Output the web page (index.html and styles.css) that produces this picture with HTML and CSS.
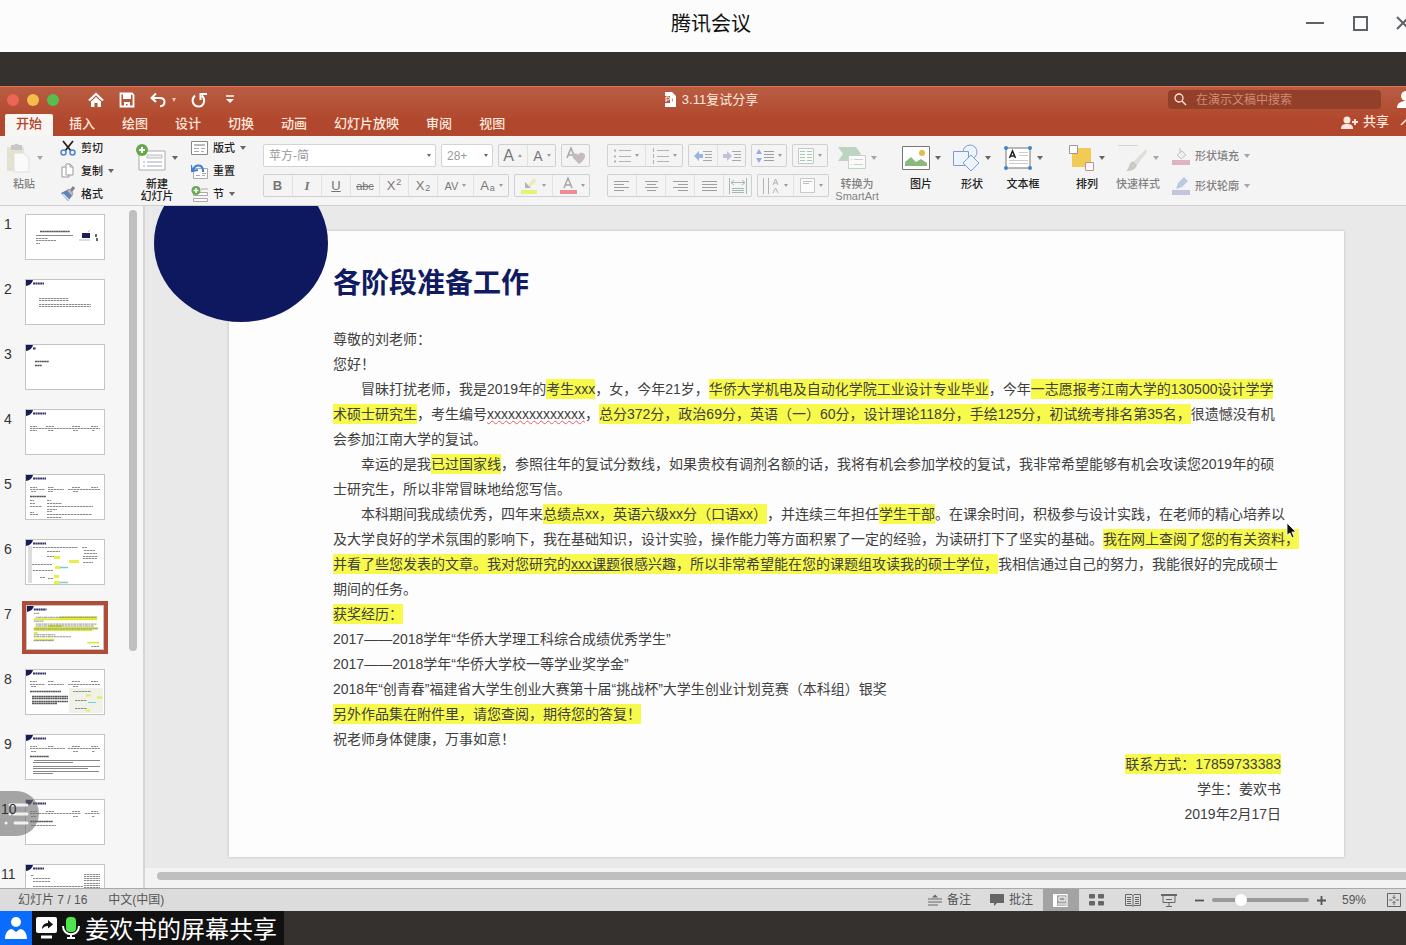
FILE: index.html
```html
<!DOCTYPE html>
<html lang="zh-CN">
<head>
	<meta charset="UTF-8">
	<title>腾讯会议</title>
	<link rel="stylesheet" href="styles.css">
</head>
<body>
	<div class="window">
		<header class="meeting-bar">
			<span class="meeting-title">腾讯会议</span>
			<div class="win-buttons">
				<button aria-label="最小化"><svg width="18" height="18" viewBox="0 0 18 18"><path d="M0 9h18" stroke-width="2"/></svg></button>
				<button aria-label="最大化"><svg width="16" height="16" viewBox="0 0 16 16"><rect x="2" y="2" width="13" height="13" stroke-width="2"/></svg></button>
				<button aria-label="关闭"><svg width="14" height="14" viewBox="0 0 14 14"><path d="M1 1l12 12M13 1L1 13" stroke-width="2"/></svg></button>
			</div>
		</header>

		<div class="band"></div>

		<div class="ppt-head">
			<div class="title-row">
				<div class="quick">
					<i class="light red"></i><i class="light yellow"></i><i class="light green"></i>
					<button class="home" aria-label="主页"><svg width="16" height="16" viewBox="0 0 16 16"><path d="M1 8.500L8 2l7 6.500" fill="none" stroke="#fff" stroke-width="2.200"/><path d="M3 9.500L8 5l5 4.500V15H9.500v-4h-3v4H3z" fill="#fff"/></svg></button>
					<button aria-label="保存"><svg width="16" height="16" viewBox="0 0 16 16"><path d="M1.500 1.500h11.500L14.500 3v11.500h-13z" fill="none" stroke="#fff" stroke-width="1.800"/><path d="M4 2h8v5H4zM5 10h6v4.500H8.500V12H7v2.500H5z" fill="#fff"/></svg></button>
					<button aria-label="撤销"><svg width="16" height="16" viewBox="0 0 16 16"><path d="M6 1.500L1.500 6 6 10M2 6h8c3 0 4.500 1.500 4.500 4S13 14 10 14.200" fill="none" stroke="#fff" stroke-width="2"/></svg><i class="caret light-caret"></i></button>
					<button aria-label="重做"><svg width="16" height="16" viewBox="0 0 16 16"><path d="M4 3.500C-.5 8 2 14.500 7.500 14.500S15 8 11 3.500M9.500 8V2H16" fill="none" stroke="#fff" stroke-width="2"/></svg></button>
					<button class="custom" aria-label="自定义"><svg width="8" height="9" viewBox="0 0 8 9"><path d="M0 1h8" stroke="#fff" stroke-width="1.500"/><path d="M0 4h8L4 8z" fill="#fff"/></svg></button>
				</div>
				<div class="doc-name">
					<svg width="13" height="15" viewBox="0 0 13 15"><path d="M1 0h7l4 4v11H1z" fill="#fff"/><path d="M0 4h6v7H0z" fill="#b3533a"/><path d="M2 10V5h2a1.500 1.500 0 0 1 0 3H2" fill="none" stroke="#fff"/><path d="M8 6a3 3 0 0 1 0 4z" fill="#b3533a"/></svg>
					3.11复试分享
				</div>
				<div class="title-right">
					<label class="search">
						<svg width="13" height="13" viewBox="0 0 13 13"><circle cx="5" cy="5" r="4" fill="none" stroke="#ffe3d8" stroke-width="1.300"/><path d="M8 8l4 4" stroke="#ffe3d8" stroke-width="1.500"/></svg>
						<input type="text" placeholder="在演示文稿中搜索" aria-label="在演示文稿中搜索">
					</label>
					<svg width="22" height="20" viewBox="0 0 22 20" fill="#fff"><circle cx="9" cy="6" r="5"/><path d="M0 18c0-5 4-7 9-7s9 2 9 7z"/></svg>
				</div>
			</div>
			<div class="tab-row">
				<nav class="tabs">
					<a href="#" class="active">开始</a>
					<a href="#">插入</a>
					<a href="#">绘图</a>
					<a href="#">设计</a>
					<a href="#">切换</a>
					<a href="#">动画</a>
					<a href="#">幻灯片放映</a>
					<a href="#">审阅</a>
					<a href="#">视图</a>
				</nav>
				<div class="share">
					<button><svg width="17" height="13" viewBox="0 0 17 13" fill="#ffe9df"><circle cx="6" cy="4" r="3.500"/><path d="M0 13c0-4 2-5 6-5s6 1 6 5z"/><path d="M11 6h6M14 3v6" stroke="#ffe9df" stroke-width="1.800"/></svg>共享</button>
					<button aria-label="折叠功能区"><svg width="12" height="8" viewBox="0 0 12 8"><path d="M1 7l5-5 5 5" fill="none" stroke="#ffe9df" stroke-width="1.500"/></svg></button>
				</div>
			</div>
		</div>

		<div class="ribbon">
			<button class="big paste off">
				<span class="pic"><svg width="26" height="30" viewBox="0 0 26 30"><path d="M1 4h17v24H1z" fill="#d9d2b4"/><path d="M5 2h3a3 3 0 0 1 5 0h3v5H5z" fill="#a5a39f"/><path d="M8 10h9l6 5v14H8z" fill="#fff" stroke="#cfcfc6"/></svg><i class="caret"></i></span>
				<span class="label">粘贴</span>
			</button>
			<div class="stack">
				<button class="small"><svg width="16" height="16" viewBox="0 0 16 16"><path d="M3 1l8 10M13 1L5 11" stroke="#222" stroke-width="1.800"/><g fill="none" stroke="#4a86d8" stroke-width="1.500"><circle cx="3.500" cy="12.500" r="2.500"/><circle cx="12.500" cy="12.500" r="2.500"/></g></svg>剪切</button>
				<button class="small"><svg width="16" height="16" viewBox="0 0 16 16" fill="#fff" stroke="#999"><path d="M2 4h5l2 2v8H2z"/><path d="M6 1h4l3 3v8H6z"/><path d="M10 1v3h3" fill="none"/></svg>复制<i class="caret"></i></button>
				<button class="small"><svg width="16" height="16" viewBox="0 0 16 16"><path d="M1 7l6-3 5 6-4 5z" fill="#5f82b8"/><path d="M3 8l6 6" stroke="#dce6f5" stroke-width="1.500"/><path d="M7 4l2-1 4 4-1 3z" fill="#bbb" stroke="#888" stroke-width=".6"/><path d="M11 5l3-4" stroke="#858585" stroke-width="3"/></svg>格式</button>
			</div>
			<button class="big new-slide">
				<span class="pic"><svg width="31" height="29" viewBox="0 0 31 29"><path d="M3 7h26v19H3z" fill="#fff" stroke="#aaa"/><path d="M11 11h15v3H11z" fill="#f0f0f0" stroke="#bbb"/><path d="M7 18h2M7 22h2M11 18h15M11 22h15" stroke="#9aa8b8"/><circle cx="6" cy="6" r="6" fill="#63a84c"/><path d="M6 3v6M3 6h6" stroke="#fff" stroke-width="2"/></svg><i class="caret"></i></span>
				<span class="label">新建<br>幻灯片</span>
			</button>
			<div class="stack">
				<button class="small"><svg width="17" height="16" viewBox="0 0 17 16"><path d="M.5 1.500h16v13H.5z" fill="#fff" stroke="#888"/><path d="M3 4h11v2H3z" fill="#bbb"/><path d="M3 8.500h5M3 11.500h5M10 8.500h4M10 11.500h3" stroke="#aaa"/></svg>版式<i class="caret"></i></button>
				<button class="small"><svg width="17" height="16" viewBox="0 0 17 16"><path d="M2.500 5.500h14v10h-14z" fill="#fff" stroke="#aaa"/><path d="M5 12.500h4M11 10.500h4M11 12.500h3" stroke="#aaa"/><path d="M2 7c2-6 9-6 10 0v2M0 2l1 6 6-1" fill="none" stroke="#3f7fd0" stroke-width="2"/></svg>重置</button>
				<button class="small"><svg width="17" height="16" viewBox="0 0 17 16"><path d="M10 3h7" stroke="#aaa"/><path d="M2.500 6.500h14v3h-14zM2.500 12.500h14v3h-14z" fill="#fff" stroke="#aaa"/><circle cx="5" cy="4.500" r="4.500" fill="#63a84c"/><path d="M5 2v5M2.500 4.500h5" stroke="#fff" stroke-width="1.500"/></svg>节<i class="caret"></i></button>
			</div>

			<div class="rows font-rows">
				<div class="row">
					<div class="field font-name"><select aria-label="字体"><option>苹方-简</option></select><i class="caret"></i></div>
					<div class="field font-size"><select aria-label="字号"><option>28+</option></select><i class="caret"></i></div>
					<div class="cells"><button><span class="fs16">A</span><i class="caret up"></i></button><button><span class="fs14">A</span><i class="caret"></i></button></div>
					<div class="cells"><button aria-label="清除格式"><svg width="20" height="19" viewBox="0 0 20 19"><path d="M1 12L5 2l4 10M2.500 9h5" fill="none" stroke="#777" stroke-width="1.500"/><path d="M13 18l-6-6c-2-4 3-6 5-3 2-4 8-2 7 2-1 3-3 5-6 7z" fill="#a8949c"/></svg></button></div>
				</div>
				<div class="row">
					<div class="cells">
						<button><b>B</b></button><button><b class="ital">I</b></button><button><u>U</u></button><button><s>abc</s></button><button>X<sup>2</sup></button><button>X<sub>2</sub></button>
						<button class="w36"><span class="spaced">AV</span><i class="caret"></i></button><button class="w36">A<sub>a</sub><i class="caret"></i></button>
					</div>
					<div class="cells">
						<button class="w38" aria-label="突出显示"><svg width="18" height="18" viewBox="0 0 18 18"><path d="M5 5v6h6z" fill="#888"/><path d="M8 8l6-7 3 3-7 6z" fill="#e5e3a0"/><path d="M1 13h16v4H1z" fill="#e0f020"/></svg><i class="caret"></i></button>
						<button class="w38" aria-label="字体颜色"><svg width="18" height="18" viewBox="0 0 18 18"><path d="M5 11L9 1l4 10M6.500 8h5" fill="none" stroke="#777" stroke-width="1.500"/><path d="M1 13h17v4H1z" fill="#f0455a"/></svg><i class="caret"></i></button>
					</div>
				</div>
			</div>

			<div class="rows para-rows">
				<div class="row">
					<div class="cells">
						<button class="w38" aria-label="项目符号"><svg width="17" height="16" viewBox="0 0 17 16" stroke="#888"><path d="M5 2.500h12M5 8.500h12M5 13.500h12"/><path d="M0 2.500h2M0 8.500h2M0 13.500h2" stroke-width="2"/></svg><i class="caret"></i></button>
						<button class="w38" aria-label="编号"><svg width="17" height="16" viewBox="0 0 17 16" stroke="#888"><path d="M5 2.500h12M5 8.500h12M5 13.500h12M1.500 0v4M1.500 6v4M1.500 12v4"/></svg><i class="caret"></i></button>
					</div>
					<div class="cells">
						<button aria-label="减少缩进"><svg width="18" height="12" viewBox="0 0 18 12"><path d="M9 1.500h9M11 4.500h7M11 7.500h7M9 10.500h9" stroke="#777"/><path d="M0 6l5-5v3h4v4H5v3z" fill="#5f88d8"/></svg></button>
						<button aria-label="增加缩进"><svg width="18" height="12" viewBox="0 0 18 12"><path d="M9 1.500h9M11 4.500h7M11 7.500h7M9 10.500h9" stroke="#777"/><path d="M9 6L4 1v3H0v4h4v3z" fill="#9c9fd0"/></svg></button>
					</div>
					<div class="cells"><button class="w36" aria-label="行距"><svg width="18" height="14" viewBox="0 0 18 14"><path d="M8 2.500h10M8 5.500h10M8 8.500h10M8 11.500h10" stroke="#666"/><path d="M0 5l3-5 3 5zM0 9h6l-3 5z" fill="#5580dc"/></svg><i class="caret"></i></button></div>
					<div class="cells"><button class="w36" aria-label="分栏"><svg width="16" height="16" viewBox="0 0 16 16"><path d="M.5.500h15v15H.5z" fill="#fff" stroke="#aaa"/><path d="M2 3.500h5M2 6.500h5M2 9.500h5M2 12.500h5M9 3.500h5M9 6.500h5M9 9.500h5M9 12.500h5" stroke="#72ab7c"/></svg><i class="caret"></i></button></div>
				</div>
				<div class="row">
					<div class="cells">
						<button aria-label="左对齐"><svg width="15" height="12" viewBox="0 0 15 12" stroke="#666"><path d="M0 1.500h15M0 4.500h10M0 7.500h15M0 10.500h10"/></svg></button>
						<button aria-label="居中"><svg width="15" height="12" viewBox="0 0 15 12" stroke="#666"><path d="M1 1.500h13M3 4.500h9M1 7.500h13M3 10.500h9"/></svg></button>
						<button aria-label="右对齐"><svg width="15" height="12" viewBox="0 0 15 12" stroke="#666"><path d="M0 1.500h15M5 4.500h10M0 7.500h15M5 10.500h10"/></svg></button>
						<button aria-label="两端对齐"><svg width="15" height="12" viewBox="0 0 15 12" stroke="#666"><path d="M0 1.500h15M0 4.500h15M0 7.500h15M0 10.500h15"/></svg></button>
						<button aria-label="分散对齐"><svg width="18" height="16" viewBox="0 0 18 16" fill="none" stroke="#6a9580"><path d="M.5 0v16M17.500 0v16M2 4.500h14M5 2L2 4.500 5 7M13 2l3 2.500L13 7M3 10.500h12M3 12.500h12M3 14.500h12"/></svg></button>
					</div>
					<div class="cells">
						<button class="w36" aria-label="文字方向"><svg width="18" height="16" viewBox="0 0 18 16" fill="none" stroke="#888"><path d="M1.500 0v16M6.500 0v16M11 7l2.500-6L16 7M12 5h3M11 15l2.500-5 2.500 5"/></svg><i class="caret"></i></button>
						<button class="w36" aria-label="对齐文本"><svg width="15" height="15" viewBox="0 0 15 15"><path d="M.5.500h14v14H.5z" fill="#fff" stroke="#aaa"/><path d="M3 3.500h9M3 5.500h6" stroke="#999"/></svg><i class="caret"></i></button>
					</div>
				</div>
			</div>

			<div class="bigs">
				<button class="big off">
					<span class="pic"><svg width="28" height="24" viewBox="0 0 28 24"><path d="M0 1h18l5 7-5 7H0l5-7z" fill="#8fbb99"/><path d="M10.500 9.500h17v13h-17z" fill="#fff" stroke="#9abaa2"/><path d="M13 13.500h1M13 18.500h1M16 13.500h9M16 18.500h9" stroke="#9abaa2"/></svg><i class="caret"></i></span>
					<span class="label">转换为<br>SmartArt</span>
				</button>
			</div>
			<div class="bigs">
				<button class="big">
					<span class="pic"><svg width="28" height="24" viewBox="0 0 28 24"><path d="M.5.500h27v23H.5z" fill="#fff" stroke="#777"/><path d="M3 20v-4l6-5 5 5 5-3 6 4v3z" fill="#8bb87d"/><circle cx="20" cy="7" r="3" fill="#e0bd4e"/></svg><i class="caret"></i></span>
					<span class="label">图片</span>
				</button>
				<button class="big">
					<span class="pic"><svg width="27" height="28" viewBox="0 0 27 28" fill="#eef4fd" stroke="#7f9ccb"><circle cx="17" cy="8" r="7"/><path d="M.5 7.500h15v14H.5z"/><path d="M18 11l8 8-8 8-8-8z"/></svg><i class="caret"></i></span>
					<span class="label">形状</span>
				</button>
				<button class="big">
					<span class="pic"><svg width="28" height="24" viewBox="0 0 28 24"><path d="M2 2h24v20H2z" fill="#fff" stroke="#777"/><path d="M15 6.500h9M15 9.500h9M5 14.500h19M5 17.500h19" stroke="#ccc"/><path d="M5.500 12L8.500 5l3 7M6.500 10h4" fill="none" stroke="#222" stroke-width="1.500"/><g fill="#3c86cf"><circle cx="2" cy="2" r="2"/><circle cx="26" cy="2" r="2"/><circle cx="2" cy="22" r="2"/><circle cx="26" cy="22" r="2"/></g></svg><i class="caret"></i></span>
					<span class="label">文本框</span>
				</button>
			</div>
			<div class="bigs">
				<button class="big">
					<span class="pic"><svg width="25" height="26" viewBox="0 0 25 26"><path d="M3 3h19v19H3z" fill="#f2cb54"/><path d="M.5.500h8v8h-8z" fill="#fff" stroke="#999"/><path d="M16.500 17.500h8v8h-8z" fill="#fff" stroke="#c98b99"/></svg><i class="caret"></i></span>
					<span class="label">排列</span>
				</button>
				<button class="big off">
					<span class="pic"><svg width="30" height="28" viewBox="0 0 30 28"><path d="M0 1.500h20L5 22z" fill="#f3f3f3"/><path d="M0 1.500h20" stroke="#bbb"/><path d="M28 5L15 18l4 3L29 8z" fill="#d0d1c6"/><path d="M15 17l4 4c-1 5-7 6-11 6 4-3 2-8 7-10z" fill="#a3ab9c"/></svg><i class="caret"></i></span>
					<span class="label">快速样式</span>
				</button>
			</div>
			<div class="rows shape-rows off">
				<button class="small"><svg width="18" height="18" viewBox="0 0 18 18"><path d="M8 1v5M5 8l5-4 4 4-5 4z" fill="#eee" stroke="#999"/><path d="M0 13h18v5H0z" fill="#cd8093"/></svg>形状填充<i class="caret"></i></button>
				<button class="small"><svg width="18" height="18" viewBox="0 0 18 18"><path d="M4 12l2-6 6-6 4 4-6 6z" fill="#8da9d6"/><path d="M0 13h18v5H0z" fill="#9aa0c9"/></svg>形状轮廓<i class="caret"></i></button>
			</div>
		</div>

		<div class="workspace">
			<aside class="panel">
				<ol class="thumbs">
					<li><span>1</span><a href="#" aria-label="幻灯片 1"><svg viewBox="0 0 78 44"><path class="t-bold" d="M14 16.500h30"/><path class="t-solid" d="M10 20.500h37"/><path class="t-line" d="M10 23.500h12M10 25.500h20M10 28.500h4"/><path d="M56 18h8v5h-8z" fill="#1a1c5e"/><path d="M53 25h11M64 15l-2 2" fill="none" stroke="#99a" stroke-width=".7"/><path d="M70 19v3M71 23v3" stroke="#333" stroke-width="1.500"/></svg></a></li>
					<li><span>2</span><a href="#" aria-label="幻灯片 2"><svg viewBox="0 0 78 44"><path class="t-corner" d="M0 0h7q-1 5-7 6z"/><path class="t-head" d="M7 3.500h11"/><path class="t-line" d="M13 18.500h29M13 20.500h30M13 24.500h52M13 26.500h52"/></svg></a></li>
					<li><span>3</span><a href="#" aria-label="幻灯片 3"><svg viewBox="0 0 78 44"><path class="t-corner" d="M0 0h7q-1 5-7 6z"/><path class="t-head" d="M7 3.500h3"/><path class="t-bold" d="M9 16.500h14M9 20.500h7"/></svg></a></li>
					<li><span>4</span><a href="#" aria-label="幻灯片 4"><svg viewBox="0 0 78 44"><path class="t-corner" d="M0 0h7q-1 5-7 6z"/><path class="t-head" d="M7 3.500h13"/><path class="t-line" d="M4 16.500h7M20 16.500h8M46 16.500h8M65 16.500h7M4 18.500h70M4 20.500h7M22 20.500h6M47 20.500h5M66 20.500h3"/></svg></a></li>
					<li><span>5</span><a href="#" aria-label="幻灯片 5"><svg viewBox="0 0 78 44"><path class="t-corner" d="M0 0h7q-1 5-7 6z"/><path class="t-head" d="M7 3.500h13"/><path class="t-line" d="M4 12.500h7M22 12.500h6M46 12.500h8M65 12.500h7M4 14.500h15M22 14.500h16M42 14.500h32M5 16.500h5M22 16.500h5M47 16.500h5M4 25.500h4M4 28.500h5M4 31.500h12M4 37.500h4M4 39.500h8M21 25.500h4M21 28.500h15M21 31.500h46M21 34.500h10M21 36.500h5M21 39.500h45M21 42.500h15"/><path class="t-bold" d="M4 21.500h16"/></svg></a></li>
					<li><span>6</span><a href="#" aria-label="幻灯片 6"><svg viewBox="0 0 78 44"><path class="t-corner" d="M0 0h7q-1 5-7 6z"/><path class="t-head" d="M7 3.500h13"/><path d="M2 6h4v37H2z" fill="#ddd"/><path class="t-line" d="M7 7.500h45M21 11.500h13M21 16.500h7M6 24.500h20M7 30.500h20M14 37.500h5M22 38.500h5M56 7.500h5M58 10.500h11M58 13.500h13M57 16.500h15M57 18.500h14M57 22.500h10"/><path d="M28 17.500h6M43 21.500h10M29 27.500h5M28 36.500h5M28 42.500h6" stroke="#e5f044" stroke-width="3"/><path d="M34 27.500h8M34 42.500h8" stroke="#68d6d0" stroke-width="1.500"/></svg></a></li>
					<li class="current"><span>7</span><a href="#" aria-label="幻灯片 7"><svg viewBox="0 0 78 44"><path class="t-corner" d="M0 0h7q-1 5-7 6z"/><path class="t-head" d="M7 3.500h13"/><path d="M33 11.500h39M7 13.500h65M22 20.500h14M7 22.500h66M7 24.500h60M7 27.500h4M7 34.500h21M62 37.500h12" stroke="#dde83c" stroke-width="2"/><path class="t-line" d="M7 7.500h6M9 11.500h63M7 15.500h10M9 18.500h63M9 20.500h60M7 23.500h66M7 29.500h22M7 31.500h38M7 35.500h20M66 41.500h8"/></svg></a></li>
					<li><span>8</span><a href="#" aria-label="幻灯片 8"><svg viewBox="0 0 78 44"><path class="t-corner" d="M0 0h7q-1 5-7 6z"/><path class="t-head" d="M7 3.500h13"/><path class="t-line" d="M4 11.500h7M22 11.500h6M46 11.500h8M65 11.500h7M4 14.500h15M22 14.500h16M42 14.500h32M5 16.500h5M47 16.500h5"/><path class="t-bold" d="M4 21.500h31M6 26.500h36M6 28.500h36M6 31.500h36M6 33.500h25"/><path d="M43 18h34v25H43z" fill="#f0f1e8"/><path class="t-line" d="M47 21.500h18M49 30.500h12M49 38.500h12"/><path d="M60 25.500h5M71 27.500h5M60 40.500h4" stroke="#e5f044" stroke-width="2"/><path d="M62 32.500h8" stroke="#68d6d0"/></svg></a></li>
					<li><span>9</span><a href="#" aria-label="幻灯片 9"><svg viewBox="0 0 78 44"><path class="t-corner" d="M0 0h7q-1 5-7 6z"/><path class="t-head" d="M7 3.500h13"/><path class="t-line" d="M4 11.500h7M22 11.500h6M46 11.500h8M65 11.500h7M4 13.500h35M42 13.500h32M5 16.500h5M47 16.500h5M66 16.500h3"/><path class="t-bold" d="M4 21.500h19"/><path class="t-solid" d="M8 25.500h66M7 27.500h40M7 31.500h67M7 33.500h55M7 36.500h66M7 38.500h20"/></svg></a></li>
					<li><span>10</span><a href="#" aria-label="幻灯片 10"><svg viewBox="0 0 78 44"><path class="t-corner" d="M0 0h7q-1 5-7 6z"/><path class="t-head" d="M7 3.500h13"/><path class="t-line" d="M4 11.500h7M20 11.500h8M46 11.500h8M65 11.500h7M4 13.500h51M59 13.500h15M5 16.500h5M47 16.500h5M66 16.500h3M5 25.500h25"/><path class="t-bold" d="M4 21.500h23"/></svg></a></li>
					<li><span>11</span><a href="#" aria-label="幻灯片 11"><svg viewBox="0 0 78 44"><path class="t-corner" d="M0 0h7q-1 5-7 6z"/><path class="t-head" d="M7 3.500h11"/><path class="t-line" d="M5 10.500h3M7 13.500h17M7 16.500h17M7 21.500h50M7 24.500h18M58 9.500h16M58 11.500h16M58 13.500h16M58 15.500h16M58 18.500h16M58 20.500h16M58 22.500h16"/></svg></a></li>
				</ol>
				<div class="v-scroll"><div></div></div>
				<button class="float-menu" aria-label="成员列表"><svg width="25" height="24" viewBox="0 0 25 24" stroke="#fff" stroke-width="3" stroke-linecap="round" opacity=".85"><path d="M6 3h17M10 12h13M11 21h12M6 12h.1M2 21h.1"/></svg></button>
			</aside>

			<main class="stage">
				<article class="slide">
					<div class="circle"></div>
					<h1>各阶段准备工作</h1>
					<div class="letter">
						<p>尊敬的刘老师：</p>
						<p>您好！</p>
						<p class="indent">冒昧打扰老师，我是2019年的<mark>考生xxx</mark>，女，今年21岁，<mark>华侨大学机电及自动化学院工业设计专业毕业</mark>，今年<mark>一志愿报考江南大学的130500设计学学<br>术硕士研究生</mark>，考生编号<span class="typo">xxxxxxxxxxxxxx</span>，<mark>总分372分，政治69分，英语（一）60分，设计理论118分，手绘125分，初试统考排名第35名，</mark>很遗憾没有机<br>会参加江南大学的复试。</p>
						<p class="indent">幸运的是我<mark>已过国家线</mark>，参照往年的复试分数线，如果贵校有调剂名额的话，我将有机会参加学校的复试，我非常希望能够有机会攻读您2019年的硕<br>士研究生，所以非常冒昧地给您写信。</p>
						<p class="indent">本科期间我成绩优秀，四年来<mark>总绩点xx，英语六级xx分（口语xx）</mark>，并连续三年担任<mark>学生干部</mark>。在课余时间，积极参与设计实践，在老师的精心培养以<br>及大学良好的学术氛围的影响下，我在基础知识，设计实验，操作能力等方面积累了一定的经验，为读研打下了坚实的基础。<mark>我在网上查阅了您的有关资料，<br>并看了些您发表的文章。我对您研究的<u>xxx课题</u>很感兴趣，所以非常希望能在您的课题组攻读我的硕士学位，</mark>我相信通过自己的努力，我能很好的完成硕士<br>期间的任务。</p>
						<p><mark>获奖经历：</mark></p>
						<p>2017——2018学年“华侨大学理工科综合成绩优秀学生”</p>
						<p>2017——2018学年“华侨大学校一等学业奖学金”</p>
						<p>2018年“创青春”福建省大学生创业大赛第十届“挑战杯”大学生创业计划竞赛（本科组）银奖</p>
						<p><mark>另外作品集在附件里，请您查阅，期待您的答复！</mark></p>
						<p>祝老师身体健康，万事如意！</p>
						<p class="right"><mark>联系方式：17859733383</mark></p>
						<p class="right">学生：姜欢书</p>
						<p class="right">2019年2月17日</p>
					</div>
					<svg class="pointer" width="12" height="17" viewBox="0 0 12 17"><path d="M1 1v12l3-2 2 5 2-1-2-5h4z" fill="#111" stroke="#fff" stroke-width=".8"/></svg>
				</article>
				<div class="h-scroll"><div></div></div>
			</main>
		</div>

		<footer class="status">
			<span class="page">幻灯片 7 / 16</span>
			<span>中文(中国)</span>
			<div class="status-right">
				<button class="notes"><svg width="14" height="12" viewBox="0 0 14 12"><path d="M0 5h14M0 8h14M0 11h10" stroke="#666" stroke-width="1.200"/><path d="M4 3.500l3-3 3 3z" fill="#666"/></svg>备注</button>
				<button class="comments"><svg width="14" height="12" viewBox="0 0 14 12"><path d="M0 0h14v9H7l-3 3V9H0z" fill="#666"/></svg>批注</button>
				<button class="view on" aria-label="普通视图"><svg width="15" height="13" viewBox="0 0 15 13"><path d="M0 0h4v13H0z" fill="#fff"/><path d="M1 .600h13v11.800H1z" fill="none" stroke="#fff" stroke-width="1.200"/><path d="M6 3h6v4H6zM5 10h8" fill="none" stroke="#fff"/></svg></button>
				<button class="view" aria-label="幻灯片浏览"><svg width="16" height="12" viewBox="0 0 16 12" fill="#666"><rect width="6" height="4.500" rx="1"/><rect x="9" width="6" height="4.500" rx="1"/><rect y="7" width="6" height="4.500" rx="1"/><rect x="9" y="7" width="6" height="4.500" rx="1"/></svg></button>
				<button class="view" aria-label="阅读视图"><svg width="16" height="13" viewBox="0 0 16 13" fill="none" stroke="#666"><path d="M.5.500H7l1 1 1-1h6.500v11H9l-1 1-1-1H.5zM8 1v11M2 3.500h4M2 5.500h4M2 7.500h4M2 9.500h4M10 3.500h4M10 5.500h4M10 7.500h4M10 9.500h4"/></svg></button>
				<button class="view" aria-label="幻灯片放映"><svg width="16" height="13" viewBox="0 0 16 13" fill="none" stroke="#666"><path d="M0 1h16" stroke-width="2"/><path d="M2 2v6.500h12V2M5 5.500h6M8 9v3M5 12.500h6"/></svg></button>
				<button class="zoom-btn" aria-label="缩小"><svg width="9" height="9" viewBox="0 0 9 9"><path d="M0 4.500h9" stroke="#555" stroke-width="1.800"/></svg></button>
				<input class="zoom" type="range" min="0" max="100" value="27" aria-label="缩放">
				<button class="zoom-btn" aria-label="放大"><svg width="9" height="9" viewBox="0 0 9 9"><path d="M0 4.500h9M4.500 0v9" stroke="#555" stroke-width="1.800"/></svg></button>
				<span class="percent">59%</span>
				<button class="fit" aria-label="适应窗口"><svg width="14" height="14" viewBox="0 0 14 14" fill="none" stroke="#666"><path d="M.5.500h13v13H.5zM7 2v3.500M7 8.500V12M2 7h3.500M8.500 7H12M5.500 4L7 5.500 8.500 4M5.500 10L7 8.500 8.500 10"/></svg></button>
			</div>
		</footer>

		<div class="sharing">
			<div class="avatar"><svg width="24" height="24" viewBox="0 0 24 24" fill="#fff"><circle cx="12" cy="6" r="5"/><path d="M1 23c0-7 4-10 7-10l4 3 4-3c3 0 7 3 7 10z"/></svg></div>
			<div class="sharer">
				<svg width="21" height="22" viewBox="0 0 21 22"><rect width="21" height="16" rx="2" fill="#fff"/><path d="M6 12c0-4 3-6 6-6V3l5 4.500-5 4V9c-3 0-4 1-6 3z" fill="#111"/><path d="M5 20h11" stroke="#fff" stroke-width="3"/></svg>
				<svg width="18" height="22" viewBox="0 0 18 22"><rect x="4" y="0" width="10" height="15" rx="4" fill="#4ce64a"/><path d="M1 9c0 11 16 11 16 0M9 17v4" fill="none" stroke="#fff" stroke-width="2"/><path d="M5 21h8" stroke="#fff" stroke-width="2"/></svg>
				姜欢书的屏幕共享
			</div>
		</div>
	</div>
</body>
</html>
```
FILE: styles.css
```css
*{
	margin: 0;
	padding: 0;
	box-sizing: border-box;
}
body{
	height: 100vh;
	overflow: hidden;
	font: 12px/16px "Liberation Sans", "Noto Sans CJK SC", sans-serif;
	color: #222;
	background: #35312e;
}
button{
	display: flex;
	align-items: center;
	border: 0;
	background: none;
	font: inherit;
	color: inherit;
	white-space: nowrap;
}
a{
	color: inherit;
	text-decoration: none;
}
svg{
	display: block;
	flex: none;
}
/* the shared desktop runs a little past the right edge */
.window{
	display: flex;
	flex-direction: column;
	width: calc(100% + 16px);
	height: 100%;
}
.meeting-bar{
	display: grid;
	grid-template-columns: 1fr auto 1fr;
	align-items: center;
	height: 52px;
	padding-bottom: 6px;
	background: #fcfcfc;
}
.meeting-title{
	grid-column: 2;
	font: 20px/28px "Noto Sans CJK SC", sans-serif;
	color: #111;
}
.win-buttons{
	display: flex;
	align-items: center;
	justify-content: flex-end;
	gap: 28px;
	padding-right: 12px;
}
.win-buttons svg{
	fill: none;
	stroke: #5c6266;
}
.band{
	height: 34px;
}

/* title and tabs */
.ppt-head{
	height: 50px;
	border-top: 1px solid #e8714d;
	background: linear-gradient(#b85d42, #b1472c 70%);
	color: #ffe9df;
}
.title-row{
	display: grid;
	grid-template-columns: 1fr auto 1fr;
	align-items: center;
	height: 25px;
}
.quick{
	display: flex;
	align-items: center;
	gap: 8px;
	padding-left: 7px;
}
.light{
	width: 12px;
	height: 12px;
	border-radius: 50%;
}
.red{ background: #ed6557; }
.yellow{ background: #f5bc4b; }
.green{ background: #58bd4f; }
.quick .home{
	margin-left: 21px;
}
.quick button{
	gap: 6px;
	margin-right: 7px;
}
.quick .custom{
	margin-left: 4px;
}
.caret{
	flex: none;
	border: 3px solid transparent;
	border-top: 4px solid #666;
	border-bottom: 0;
}
.light-caret{
	border-width: 4px 2px 0;
	border-top-color: #f0c4b4;
}
.up{
	border-top: 0;
	border-bottom: 4px solid #666;
}
.doc-name{
	display: flex;
	align-items: center;
	gap: 5px;
	font-size: 13px;
}
.title-right{
	display: flex;
	justify-content: flex-end;
	align-items: center;
	gap: 16px;
}
.search{
	display: flex;
	align-items: center;
	gap: 9px;
	width: 213px;
	height: 19px;
	padding-left: 6px;
	border-radius: 4px;
	background: #93402a;
}
.search input{
	flex: 1;
	min-width: 0;
	border: 0;
	outline: 0;
	background: none;
	font: inherit;
	color: #fff;
}
.search input::placeholder{
	color: #d08a76;
}
.title-right > svg{
	margin-right: 3px;
}
.tab-row{
	display: flex;
	justify-content: space-between;
	height: 24px;
}
.tabs{
	display: flex;
	gap: 5px;
	padding: 2px 0 0 5px;
}
.tabs a{
	padding: 0 11px;
	font-size: 13px;
	font-weight: 500;
	line-height: 20px;
}
.tabs .active{
	color: #b5412a;
	background: #f8f5f3;
	border-radius: 2px 2px 0 0;
}
.share{
	display: flex;
	gap: 11px;
	padding-right: 10px;
	font-size: 13px;
	font-weight: 500;
}
.share button{
	height: 20px;
	gap: 5px;
}

/* ribbon */
.ribbon{
	display: flex;
	align-items: flex-start;
	height: 70px;
	border-bottom: 1px solid #cfcfcf;
	background: #f5f4f4;
	font-size: 11px;
	font-weight: 500;
}
.off{
	opacity: .55;
}
.big{
	flex-direction: column;
	width: 48px;
	padding-top: 6px;
}
.pic{
	display: flex;
	align-items: center;
	gap: 5px;
	height: 32px;
}
.big .label{
	margin-top: 4px;
	line-height: 12px;
}
.stack{
	display: flex;
	flex-direction: column;
}
.paste{
	margin-right: 12px;
}
.new-slide{
	margin: 0 10px 0 19px;
}
.small{
	height: 23px;
	gap: 5px;
}
.rows{
	display: flex;
	flex-direction: column;
	gap: 7px;
	padding-top: 8px;
}
.row{
	display: flex;
	gap: 5px;
}
.font-rows,
.para-rows{
	margin-left: 17px;
}
.field{
	display: flex;
	align-items: center;
	height: 23px;
	padding: 0 4px 0 5px;
	border: 1px solid #d4d4d4;
	border-radius: 2px;
	background: #fff;
}
.field select{
	flex: 1;
	min-width: 0;
	border: 0;
	appearance: none;
	background: none;
	font: inherit;
	font-size: 12px;
	font-weight: 400;
	color: #999;
}
.font-name{ width: 173px; }
.font-size{ width: 52px; }
.cells{
	display: flex;
	height: 23px;
	border-radius: 2px;
	box-shadow: inset 0 0 0 1px #d0d0d0;
}
.cells button{
	justify-content: center;
	gap: 4px;
	width: 29px;
	font-size: 13px;
	opacity: .6;
}
.cells button + button{
	border-left: 1px solid #d6d6d6;
}
.cells .w36{ width: 36px; }
.cells .w38{ width: 38px; }
.cells .caret,
.field .caret{
	border-width: 3px 2px 0;
}
.cells .up{
	border-width: 0 2px 3px;
}
.cells sup,
.cells sub{
	margin-left: -3px;
	font-size: 9px;
	line-height: 9px;
}
.cells sup{ margin-bottom: 6px; }
.cells sub{ margin-top: 6px; }
.ital{ font-family: "Liberation Serif", serif; font-style: italic; }
.cells s{ font-size: 11px; }
.fs16{ font-size: 16px; }
.fs14{ font-size: 14px; }
.spaced{ font-size: 11px; }
.bigs{
	display: flex;
	gap: 3px;
	margin-right: 16px;
}
.para-rows + .bigs{
	margin-left: 4px;
}
.shape-rows{
	margin-left: -6px;
}

/* slides panel */
.workspace{
	display: flex;
	flex: 1;
	min-height: 0;
}
.panel{
	position: relative;
	display: flex;
	justify-content: space-between;
	width: 145px;
	border-right: 2px solid #d5d5d5;
	overflow: hidden;
	background: #f6f6f6;
}
.thumbs{
	list-style: none;
	padding: 5px 0 0;
}
.thumbs li{
	display: flex;
	height: 65px;
}
.thumbs span{
	z-index: 1;
	width: 22px;
	padding: 5px 0 0 4px;
	font-size: 14px;
	color: #333;
}
.thumbs li:nth-child(n+10) span{
	padding-left: 1px;
}
.thumbs a{
	width: 86px;
	height: 53px;
	padding: 3px;
	border: 0 solid #b04c37;
}
.thumbs svg{
	width: 80px;
	height: 46px;
	border: 1px solid #c4c4c4;
	background: #fff;
}
.thumbs .current a{
	padding: 0;
	border-width: 4px;
	background: #fff;
}
.thumbs .current svg{
	width: 78px;
	height: 45px;
}
.t-corner{ fill: #191a58; }
.t-head{ stroke: #33336b; stroke-width: 2; stroke-dasharray: 2 .4; }
.t-line{ stroke: #8c8c8c; stroke-width: 1; stroke-dasharray: 2 .5 3 .5; }
.t-bold{ stroke: #555; stroke-width: 1.5; stroke-dasharray: 2 .3; }
.t-solid{ stroke: #888; }
.v-scroll{
	padding: 4px 6px 0 0;
}
.v-scroll div{
	width: 8px;
	height: 65%;
	border-radius: 4px;
	background: #bfbfbf;
}
.float-menu{
	position: absolute;
	left: 0;
	bottom: 52px;
	justify-content: center;
	width: 39px;
	height: 45px;
	padding-right: 7px;
	border-radius: 0 23px 23px 0;
	background: rgba(110, 110, 110, .6);
}

/* slide */
.stage{
	display: flex;
	flex: 1;
	flex-direction: column;
	min-width: 0;
	overflow: hidden;
	background: #e9e9e9;
}
.slide{
	position: relative;
	flex: 1;
	min-height: 0;
	margin: 25px 78px 11px 84px;
	padding: 30px 63px 0 104px;
	background: #fdfdfd;
	box-shadow: 0 0 3px #bbb;
}
.circle{
	position: absolute;
	left: -75px;
	top: -67px;
	width: 174px;
	height: 158px;
	border-radius: 50%;
	background: #0d185f;
}
.slide h1{
	font: bold 28px/40px "Noto Sans CJK SC", sans-serif;
	color: #101b62;
}
.letter{
	margin-top: 26px;
	font-size: 14px;
	line-height: 25px;
	color: #404040;
	white-space: nowrap;
	text-spacing-trim: space-all;
}
.indent{
	text-indent: 28px;
}
.right{
	text-align: right;
}
mark{
	padding: 2px 0;
	color: inherit;
	background: #f8fa4b;
}
.typo{
	text-decoration: underline wavy #e0606a 1px;
}
.pointer{
	position: absolute;
	right: 46px;
	top: 291px;
}
.h-scroll{
	height: 20px;
	padding: 3px 0 0 12px;
	border-top: 1px solid #f2f2f2;
	background: #f3f3f3;
}
.h-scroll div{
	height: 8px;
	border-radius: 4px 0 0 4px;
	background: #bfbfbf;
}

/* status bar */
.status{
	display: flex;
	align-items: center;
	height: 23px;
	padding: 0 21px 0 18px;
	border-top: 1px solid #a9a9a9;
	background: #dcdcdc;
	color: #555;
}
.page{
	margin-right: 21px;
}
.status-right{
	display: flex;
	align-items: center;
	height: 100%;
	margin-left: auto;
}
.status-right button{
	gap: 5px;
}
.comments{
	margin: 0 10px 0 19px;
}
.view{
	justify-content: center;
	width: 36px;
	height: 100%;
}
.on{
	background: #a3a3a3;
}
.zoom-btn{
	margin: 0 8px;
}
.zoom{
	width: 97px;
	height: 12px;
	appearance: none;
	background: none;
}
.zoom::-webkit-slider-runnable-track{
	height: 4px;
	border-radius: 2px;
	background: #999;
}
.zoom::-webkit-slider-thumb{
	width: 12px;
	height: 12px;
	margin-top: -4px;
	appearance: none;
	border-radius: 50%;
	background: #fff;
}
.percent{
	margin: 0 21px 0 8px;
}

/* who is sharing */
.sharing{
	display: flex;
	height: 34px;
}
.avatar{
	display: flex;
	align-items: center;
	justify-content: center;
	width: 32px;
	background: #0a6cff;
}
.sharer{
	display: flex;
	align-items: center;
	gap: 5px;
	padding: 0 7px 0 4px;
	font: 24px/34px "Noto Sans CJK SC", sans-serif;
	color: #fff;
	background: #111;
}
```
